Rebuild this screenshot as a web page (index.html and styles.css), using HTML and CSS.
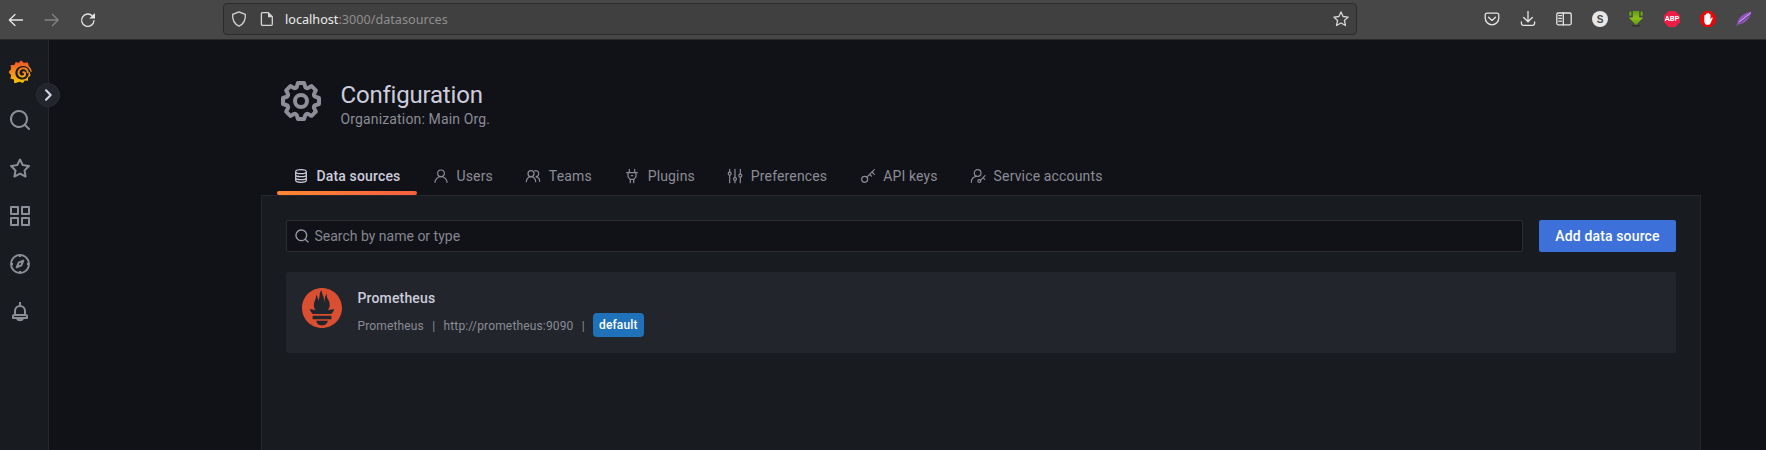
FILE: index.html
```
<!DOCTYPE html>
<html lang="en">
<head>
<meta charset="utf-8">
<title>Configuration: Data sources - Grafana</title>
<link rel="stylesheet" href="styles.css">
</head>
<body>
<header class="browser">
  <div class="nav-buttons">
    <svg class="i16" viewBox="0 0 16 16"><path d="M14.500 8H1.500M7 2.500 1.300 8l5.700 5.500" /></svg>
    <svg class="i16 disabled" viewBox="0 0 16 16"><path d="M1 8h13.200M8.500 2.500 14.200 8l-5.700 5.500"/></svg>
    <svg class="i16" viewBox="0 0 16 16"><path d="M14 8.700A6.200 6.200 0 1 1 12.400 4"/><path class="solid" d="M15 1v5.500H9.300z"/></svg>
  </div>
  <div class="urlbar">
    <svg class="i16" viewBox="0 0 16 16"><path d="M8 .9 14.300 3.300C14.800 8.500 12.500 13 8 15.200 3.500 13 1.200 8.500 1.700 3.300z"/></svg>
    <svg class="i16" viewBox="0 0 16 16"><path d="M3.500 1.700H9.300L13.300 5.700V13.200a1.100 1.100 0 0 1-1.100 1.100H3.500a1.100 1.100 0 0 1-1.100-1.100V2.800a1.100 1.100 0 0 1 1.100-1.100z"/><path class="solid" d="M9 1.500v4.700h4.500z"/></svg>
    <span class="url"><b>localhost</b>:3000/datasources</span>
    <svg class="i16" viewBox="0 0 16 16"><path d="m8 .9 2.100 4.600 5.100.6-3.800 3.400 1.100 5L8 12l-4.500 2.500 1.100-5L.8 6.100l5.100-.6z"/></svg>
  </div>
  <div class="extensions">
    <svg class="i16" viewBox="0 0 16 16"><path d="M2.700 2.200h10.600A1.600 1.600 0 0 1 14.800 3.800V7A6.800 6.800 0 0 1 1.200 7V3.800A1.600 1.600 0 0 1 2.700 2.200zM4.500 6.200 8 9.400l3.500-3.200"/></svg>
    <svg class="i16" viewBox="0 0 16 16"><path d="M8 0v10.500M3.700 6.500 8 10.700l4.300-4.200M1.400 11v1.500a1.800 1.800 0 0 0 1.800 1.800h9.600a1.800 1.800 0 0 0 1.800-1.800V11"/></svg>
    <svg class="i16" viewBox="0 0 16 16"><rect x=".8" y="2" width="14.400" height="11.800" rx="1.500"/><path d="M7.300 2v12M2.700 4.600h2.800M2.700 7.400h2.800M2.700 10.200h2.800"/></svg>
    <span class="ext ext-s">S</span>
    <svg class="i16" viewBox="0 0 16 16"><defs><linearGradient id="green" x2="0" y2="1"><stop stop-color="#5c9d0b"/><stop offset=".5" stop-color="#8cc01c"/><stop offset="1" stop-color="#5b9410"/></linearGradient></defs><ellipse cx="8" cy="14.800" rx="4.500" ry="1" fill="#333" stroke="none"/><path fill="url(#green)" stroke="none" d="M4.800 0h6.400v6.500h4L8 14.300.8 6.500h4zM1.400.5h2v4h-2zM12.600.5h2v4h-2z"/></svg>
    <span class="ext ext-abp">ABP</span>
    <svg class="i16" viewBox="0 0 16 16"><path fill="#e20a0a" stroke="none" d="M4.700 0h6.600L16 4.700v6.600L11.300 16H4.700L0 11.300V4.700z"/><path fill="#fff" stroke="none" d="M4.300 8.800V4.800a.7.700 0 0 1 1.500 0V3.400a.75.75 0 0 1 1.600 0V2.600a.75.75 0 0 1 1.600 0v1a.75.75 0 0 1 1.500 0v4.700l.9-1.400c.6-.7 1.600-.2 1.200.6l-1.900 4.400c-.6 1.200-1.500 1.900-2.900 1.900-2.200 0-3.500-1.400-3.500-3.400z"/></svg>
    <svg class="i16" viewBox="0 0 16 16"><path fill="#9155c4" stroke="none" d="M15.300.5C7.500 2.200 2.200 6.500 1.300 12.200L.2 15.400l2-1.900C9 13 14 7.800 15.300.5z"/><path stroke="#d0a8ee" stroke-width="1" d="M14.500 2 3.400 10.800"/><path stroke="#474747" stroke-width=".7" d="M12.500 5.500 4 12"/></svg>
  </div>
</header>
<div class="app">
  <nav class="sidebar">
    <svg class="i24" viewBox="0 0 24 24"><defs><linearGradient id="flame" gradientUnits="userSpaceOnUse" x1="0" y1="24" x2="0" y2="0"><stop stop-color="#fbca0a"/><stop offset="1" stop-color="#f04e28"/></linearGradient></defs><path fill="url(#flame)" d="M13 .3 15.800 2.800 20 2.600 20.700 6C22.600 7.500 23.600 9.500 23.700 12L21.500 11.500 22.600 15.500 20 17.700 20 20.800 16.800 20.600 14.800 23 11.800 21.700 6.300 23.200 5.900 19.600 2.400 18.600 3.200 15.200.6 12 3 9.200 2.700 5 6.300 5 7.800 2.100 10.800 2.700z"/><path fill="#181b1f" d="M22.500 12C22 8.400 18.500 5.700 14.500 6 10 6.300 7.200 9.600 7.400 13.300c.2 4 3.300 6.400 6.900 6.300 3-.1 5.200-1.800 6.100-4.400l.5-3.200z"/><path fill="none" stroke="url(#flame)" stroke-width="2" stroke-linecap="round" d="M19.800 12.300c-.4-2.700-2.600-4.200-5-4-2.700.2-4.500 2.300-4.300 4.700.2 2.200 2 3.700 4 3.500 1.700-.2 2.700-1.500 2.600-2.700-.1-1-.9-1.600-1.700-1.500"/></svg>
    <svg class="i24" viewBox="0 0 24 24"><path d="M21.710,20.290,18,16.610A9,9,0,1,0,16.610,18l3.680,3.680a1,1,0,0,0,1.420,0A1,1,0,0,0,21.710,20.290ZM11,18a7,7,0,1,1,7-7A7,7,0,0,1,11,18Z"/></svg>
    <svg class="i24" viewBox="0 0 24 24"><path d="M22,9.670A1,1,0,0,0,21.140,9l-5.690-.83L12.900,3a1,1,0,0,0-1.800,0L8.550,8.160,2.860,9a1,1,0,0,0-.81.680,1,1,0,0,0,.25,1l4.130,4-1,5.680A1,1,0,0,0,6.900,21.440L12,18.770l5.100,2.670a.93.930,0,0,0,.46.120,1,1,0,0,0,.59-.19,1,1,0,0,0,.4-1l-1-5.680,4.130-4A1,1,0,0,0,22,9.670Zm-6.150,4a1,1,0,0,0-.29.880l.72,4.200-3.760-2a1.060,1.060,0,0,0-.94,0l-3.760,2,.72-4.200a1,1,0,0,0-.29-.88l-3-3,4.210-.61a1,1,0,0,0,.76-.55L12,5.700l1.880,3.820a1,1,0,0,0,.76.550l4.210.61Z"/></svg>
    <svg class="i24 line" viewBox="0 0 24 24"><path d="M3 3h7v7H3zM14 3h7v7h-7zM3 14h7v7H3zM14 14h7v7h-7z"/></svg>
    <svg class="i24 line" viewBox="0 0 24 24"><circle cx="12" cy="12" r="9"/><path d="M12 3v2M12 19v2M3 12h2M19 12h2M15.300 8.700l-4.600 2-2 4.600 4.600-2z"/></svg>
    <svg class="i24 line" viewBox="0 0 24 24"><path d="M12 2v3M7 15v-4a5 5 0 0 1 10 0v4M6 15h12a1 1 0 0 1 1 1v2H5v-2a1 1 0 0 1 1-1zM9 18.500a3.200 2.500 0 0 0 6 0"/></svg>
    <span class="expand"><svg viewBox="0 0 12 12"><path d="M4.300 2 8.300 6l-4 4"/></svg></span>
  </nav>
  <main class="page">
    <div class="heading">
      <svg class="cog" viewBox="0 0 24 24"><path d="M21.320,9.550l-1.890-.63.89-1.780A1,1,0,0,0,20.130,6L18,3.870a1,1,0,0,0-1.150-.19l-1.780.89-.63-1.890A1,1,0,0,0,13.500,2h-3a1,1,0,0,0-.95.680L8.920,4.570,7.140,3.680A1,1,0,0,0,6,3.870L3.870,6a1,1,0,0,0-.19,1.150l.89,1.780-1.890.63A1,1,0,0,0,2,10.500v3a1,1,0,0,0,.68.950l1.890.63-.89,1.780A1,1,0,0,0,3.870,18L6,20.130a1,1,0,0,0,1.150.19l1.780-.89.63,1.890a1,1,0,0,0,.95.680h3a1,1,0,0,0,.95-.68l.63-1.890,1.780.89A1,1,0,0,0,18,20.130L20.130,18a1,1,0,0,0,.19-1.150l-.89-1.780,1.890-.63A1,1,0,0,0,22,13.500v-3A1,1,0,0,0,21.320,9.550ZM20,12.780l-1.200.4A2,2,0,0,0,17.640,16l.57,1.140-1.100,1.100L16,17.640a2,2,0,0,0-2.790,1.160l-.4,1.200H11.220l-.4-1.200A2,2,0,0,0,8,17.640l-1.140.57-1.100-1.100L6.360,16A2,2,0,0,0,5.200,13.180L4,12.780V11.220l1.200-.4A2,2,0,0,0,6.360,8L5.790,6.890l1.100-1.100L8,6.360A2,2,0,0,0,10.820,5.200l.4-1.200h1.560l.4,1.200A2,2,0,0,0,16,6.360l1.140-.57,1.100,1.100L17.640,8a2,2,0,0,0,1.160,2.790l1.200.4ZM12,8a4,4,0,1,0,4,4A4,4,0,0,0,12,8Zm0,6a2,2,0,1,1,2-2A2,2,0,0,1,12,14Z"/></svg>
      <div>
        <h1>Configuration</h1>
        <div class="subtitle">Organization: Main Org.</div>
      </div>
    </div>
    <div class="tabs">
      <a class="tab active"><svg class="ti" viewBox="0 0 24 24"><path d="M4 5.500c0-4 16-4 16 0v13c0 4-16 4-16 0zM4 5.500c0 4 16 4 16 0M4 10c0 4 16 4 16 0M4 14.500c0 4 16 4 16 0M8 12v.1M8 16.500v.1"/></svg>Data sources</a>
      <a class="tab"><svg class="ti" viewBox="0 0 24 24"><circle cx="12" cy="8" r="5"/><path d="M3 21.500a9 8.500 0 0 1 18 0"/></svg>Users</a>
      <a class="tab"><svg class="ti" viewBox="0 0 24 24"><circle cx="9" cy="8.500" r="4.500"/><path d="M2 20.500a7 7.500 0 0 1 14 0M14.500 4.300a4.500 4.500 0 1 1 1.500 8.700 7 7 0 0 1 6 7"/></svg>Teams</a>
      <a class="tab"><svg class="ti" viewBox="0 0 24 24"><path d="M4 7h16M8 2v5M16 2v5M6 7v6l3 4h6l3-4V7M9.500 17v5M14.500 17v5M11 11.500h2"/></svg>Plugins</a>
      <a class="tab"><svg class="ti" viewBox="0 0 24 24"><path d="M4 2v4M4 11v11M12 2v12M12 19v3M20 2v7M20 14v8"/><circle cx="4" cy="8.500" r="2.200"/><circle cx="12" cy="16.500" r="2.200"/><circle cx="20" cy="11.500" r="2.200"/></svg>Preferences</a>
      <a class="tab"><svg class="ti" viewBox="0 0 24 24"><circle cx="7" cy="17" r="4.500"/><path d="M10.300 13.700 21.500 2.500M18 6l3.500 3.500M14.500 9.500l2.500 2.500"/></svg>API keys</a>
      <a class="tab"><svg class="ti" viewBox="0 0 24 24"><circle cx="11.500" cy="7.500" r="5"/><path d="M2 21.500c0-5 3-8.500 8-9M15.500 18.500l7-7M19.500 14.500l2.500 2.500"/><circle cx="14" cy="19.500" r="2.200"/></svg>Service accounts</a>
    </div>
    <section class="panel">
      <div class="toolbar">
        <div class="search"><svg class="si" viewBox="0 0 24 24"><path d="M21.710,20.290,18,16.610A9,9,0,1,0,16.610,18l3.680,3.680a1,1,0,0,0,1.420,0A1,1,0,0,0,21.710,20.290ZM11,18a7,7,0,1,1,7-7A7,7,0,0,1,11,18Z"/></svg><span>Search by name or type</span></div>
        <button class="add">Add data source</button>
      </div>
      <article class="card">
        <svg class="logo" viewBox="0 .667 113.333 113.333"><path fill="#da4e31" d="M56.667,0.667C25.372,0.667,0,26.036,0,57.332c0,31.295,25.372,56.666,56.667,56.666s56.666-25.371,56.666-56.666C113.333,26.036,87.961,0.667,56.667,0.667z M56.667,106.722c-8.904,0-16.123-5.948-16.123-13.283H72.790C72.790,100.773,65.571,106.722,56.667,106.722z M83.297,89.040H30.034v-9.658h53.264V89.040z M83.106,74.411h-52.920c-0.176-0.203-0.356-0.403-0.526-0.609c-5.452-6.620-6.736-10.076-7.983-13.598c-0.021-0.116,6.611,1.355,11.314,2.413c0,0,2.420,0.560,5.958,1.205c-3.397-3.982-5.414-9.044-5.414-14.218c0-11.359,8.712-21.285,5.569-29.308c3.059,0.249,6.331,6.456,6.552,16.161c3.252-4.494,4.613-12.701,4.613-17.733c0-5.210,3.433-11.262,6.867-11.469c-3.061,5.045,0.793,9.370,4.219,20.099c1.285,4.030,1.121,10.812,2.113,15.113C63.797,33.534,65.333,20.500,71,16c-2.500,5.667,0.370,12.758,2.333,16.167c3.167,5.500,5.087,9.667,5.087,17.548c0,5.284-1.951,10.259-5.242,14.148c3.742-0.702,6.326-1.335,6.326-1.335l12.152-2.371C91.657,60.156,89.891,67.518,83.106,74.411z"/></svg>
        <div>
          <h2>Prometheus</h2>
          <div class="meta"><span>Prometheus</span><i>|</i><span>http://prometheus:9090</span><i>|</i><span class="badge">default</span></div>
        </div>
      </article>
    </section>
  </main>
</div>
</body>
</html>
```
FILE: styles.css
```
* { box-sizing: border-box; }
body {
  margin: 0;
  height: 450px;
  display: flex;
  flex-direction: column;
  overflow: hidden;
  background: #111217;
  color: #ccccdc;
  font: 14px/22px Roboto, sans-serif;
  letter-spacing: 0.15px;
}
h1, h2 { margin: 0; font-weight: 400; }
svg { display: block; flex: none; }

.browser {
  flex: none;
  height: 40px;
  display: flex;
  align-items: flex-start;
  background: #474747;
  border-bottom: 1px solid #2a2a2c;
  color: #e6e6e6;
}
.i16 { width: 16px; height: 16px; fill: none; stroke: currentColor; stroke-width: 1.3; stroke-linejoin: round; stroke-linecap: round; }
.i16 .solid { fill: currentColor; stroke: none; }
.disabled { color: #838383; }
.nav-buttons { display: flex; gap: 20px; width: 223px; padding: 12px 0 0 8px; }
.urlbar {
  width: 1134px;
  height: 32px;
  margin-top: 3px;
  padding: 0 7px;
  display: flex;
  align-items: center;
  gap: 12px;
  background: #404040;
  border: 1px solid #2b2b2b;
  border-radius: 4px;
  color: #d5d5d5;
}
.url { flex: 1; margin-left: -2px; font: 12.65px/20px "Noto Sans", sans-serif; letter-spacing: 0; color: #8f8f8f; }
.url b { font-weight: 400; color: #ececec; }
.extensions { display: flex; gap: 20px; padding: 11px 0 0 127px; }
.ext { width: 16px; height: 16px; text-align: center; letter-spacing: 0; }
.ext-s { border-radius: 50%; background: #e7e7e7; color: #474747; font: 700 10px/17px "Liberation Sans", sans-serif; }
.ext-abp {
  background: #ed1e45;
  color: #fff;
  font: 700 7.5px/16px Roboto, sans-serif;
  clip-path: polygon(30% 0, 70% 0, 100% 30%, 100% 70%, 70% 100%, 30% 100%, 0 70%, 0 30%);
}

.app { flex: 1; min-height: 0; display: flex; }
.sidebar {
  position: relative;
  width: 49px;
  padding: 20px 0 0 8px;
  display: flex;
  flex-direction: column;
  gap: 24px;
  background: #181b1f;
  border-right: 1px solid #25272c;
}
.i24 { width: 24px; height: 24px; fill: #8e8e99; }
.line { fill: none; stroke: #8e8e99; stroke-width: 2; stroke-linejoin: round; }
.expand {
  position: absolute;
  top: 43px;
  right: -12px;
  width: 24px;
  height: 24px;
  display: grid;
  place-items: center;
  border-radius: 50%;
  background: #22252b;
  border: 1px solid #2c2f35;
}
.expand svg { width: 14px; height: 14px; fill: none; stroke: #d5d5e4; stroke-width: 1.8; stroke-linecap: round; stroke-linejoin: round; }

.page { flex: 1; display: flex; flex-direction: column; padding: 37px 65px 0 212px; }
.heading { flex: none; display: flex; gap: 15.5px; padding-left: 16px; height: 79px; }
.cog { width: 48px; height: 48px; fill: #8e8e99; }
h1 { padding-top: 4px; font-size: 24px; line-height: 28px; letter-spacing: -0.2px; }
.subtitle { line-height: 20px; color: #8b8c96; }

.tabs { flex: none; display: flex; height: 39px; padding-left: 16px; }
.tab { position: relative; display: flex; align-items: center; gap: 7.5px; padding: 0 16px; color: #8b8c96; white-space: nowrap; }
.tab + .tab { padding-right: 16.4px; }
.tab.active { width: 140px; color: #ccccdc; font-weight: 500; }
.tab.active::after {
  content: "";
  position: absolute;
  left: 0;
  right: 0;
  bottom: 0;
  height: 4px;
  border-radius: 2px;
  background: linear-gradient(90deg, #ff8833, #f55f3e);
}
.ti { width: 16px; height: 16px; margin-top: 1px; fill: none; stroke: currentColor; stroke-width: 1.8; stroke-linecap: round; }

.panel { flex: 1; padding: 24px; background: #181b1f; border: 1px solid #25272c; border-bottom: 0; }
.toolbar { display: flex; gap: 16px; margin-bottom: 20px; }
.search {
  flex: 1;
  height: 32px;
  display: flex;
  align-items: center;
  gap: 4.5px;
  padding-left: 7px;
  background: #111217;
  border: 1px solid #2d2e33;
  border-radius: 2px;
  color: #85868f;
  letter-spacing: 0;
}
.si { width: 16px; height: 16px; fill: #9898a3; }
.add {
  width: 137px;
  height: 32px;
  padding: 0;
  border: 0;
  border-radius: 2px;
  background: #3d71d9;
  color: #fff;
  font: 500 14px/32px Roboto, sans-serif;
  letter-spacing: 0.15px;
}
.card { display: flex; gap: 15.5px; height: 81px; padding: 16px; background: #22252b; border-radius: 2px; }
.logo { width: 40px; height: 40px; }
h2 { font-size: 14px; line-height: 20px; font-weight: 500; letter-spacing: 0.15px; }
.meta { display: flex; align-items: center; height: 24px; margin-top: 5px; font-size: 12px; color: #8b8c96; }
.meta > span:not(.badge), .meta i { padding-top: 1px; }
.meta i { width: 19.5px; text-align: center; font-style: normal; }
.badge { height: 24px; padding: 0 6px; border-radius: 4px; background: #1f72b9; color: #fff; font-weight: 500; line-height: 25px; }
```
